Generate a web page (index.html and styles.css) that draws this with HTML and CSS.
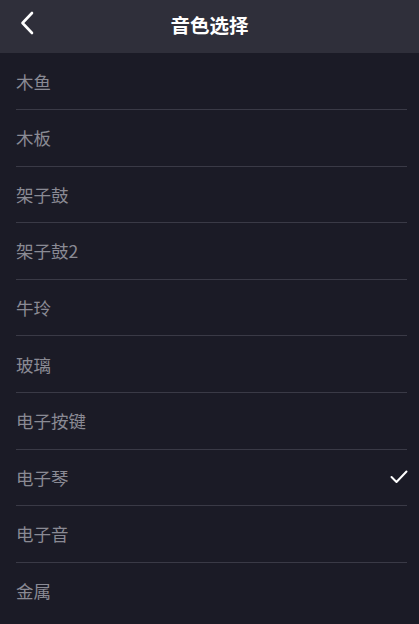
FILE: index.html
```html
<!DOCTYPE html>
<html lang="zh-CN">
<head>
    <meta charset="UTF-8">
    <meta name="viewport" content="width=device-width, initial-scale=1.0">
    <title>音色选择</title>
    <link rel="stylesheet" href="styles.css">
</head>
<body>
    <div class="header">
        <svg class="back" width="14" height="24" viewBox="0 0 14 24">
            <path d="M12 2 L2.5 12 L12 22" fill="none" stroke="#fff" stroke-width="2.6" stroke-linecap="round" stroke-linejoin="round"/>
        </svg>
        <h1>音色选择</h1>
    </div>
    <ul class="list">
        <li>木鱼</li>
        <li>木板</li>
        <li>架子鼓</li>
        <li>架子鼓2</li>
        <li>牛玲</li>
        <li>玻璃</li>
        <li>电子按键</li>
        <li class="selected">电子琴
            <svg class="check" width="18" height="14" viewBox="0 0 18 14">
                <path d="M1.5 7 L6.5 12 L16.5 1.5" fill="none" stroke="#fff" stroke-width="2" stroke-linecap="round" stroke-linejoin="round"/>
            </svg>
        </li>
        <li>电子音</li>
        <li>金属</li>
    </ul>
</body>
</html>
```

FILE: styles.css
```css
body {
    margin: 0;
    background: #1b1b26;
    font-family: "Noto Sans CJK SC", "Noto Sans", sans-serif;
}
.header {
    height: 53px;
    background: #2f2f3a;
    display: flex;
    align-items: center;
    justify-content: center;
    position: relative;
}
.header h1 {
    margin: 0 0 4px;
    color: #fff;
    font-size: 19.5px;
    font-weight: bold;
    line-height: 1;
}
.back {
    position: absolute;
    left: 20px;
    top: 11px;
}
.list {
    list-style: none;
    margin: 0;
    padding: 0 12px 0 16px;
}
.list li {
    height: 55.6px;
    border-bottom: 1px solid #3a3a46;
    display: flex;
    align-items: center;
    justify-content: space-between;
    color: #8a8a94;
    font-size: 17.5px;
}
.list li:first-child {
    height: 56px;
}
.list li:last-child {
    border-bottom: none;
}
.check {
    margin-right: -1px;
}
```
